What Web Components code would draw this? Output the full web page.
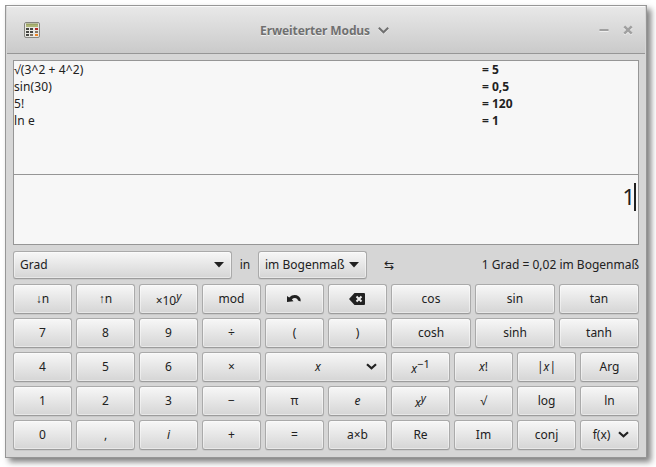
<!DOCTYPE html>
<html lang="de">
<head>
<meta charset="utf-8">
<title>Erweiterter Modus</title>
<style>
html, body { margin: 0; background: #fff; }
body { width: 656px; height: 467px; overflow: hidden; padding: 5px; box-sizing: border-box; font: 12px/17px "Noto Sans", "Open Sans", sans-serif; color: #212121; }
</style>
</head>
<body>
<calc-window></calc-window>
<script>
const define = (name, html) => customElements.define(name, class extends HTMLElement {
  constructor() {
    super();
    const t = document.createElement('template');
    t.innerHTML = html;
    this.attachShadow({ mode: 'open' }).appendChild(t.content.cloneNode(true));
  }
});

define('calc-header', `
<style>
:host { display: flex; align-items: center; box-sizing: border-box; height: 48px; margin: 0 1px; padding: 0 12px 0 17px; border-top: 1px solid #fafafa; border-bottom: 1px solid #969696; background: linear-gradient(#e8e8e8, #cacaca); }
.mode { flex: 1; display: flex; align-items: center; justify-content: center; gap: 8px; font-weight: bold; letter-spacing: -.12px; color: #707070; text-shadow: 0 1px rgba(255,255,255,.7); padding-left: 10px; }
svg { display: block; }
.controls { display: flex; align-items: center; gap: 14px; }
</style>
<svg width="16" height="16" viewBox="0 0 16 16">
  <rect x=".5" y=".5" width="15" height="15" rx="1.5" fill="#e9e8e3" stroke="#85857f"/>
  <rect x="2" y="2" width="12" height="3" fill="#adb575"/><path d="M2 2h12" stroke="#8c9456"/>
  <g fill="#464744"><path d="M2 6h3v2H2zM6 6h3v2H6zM2 9h3v2H2zM6 9h3v2H6zM2 12h3v2H2z"/></g>
  <path d="M11 6h3v2h-3z" fill="#b22a25"/><path d="M11 9h3v2h-3zM6 12h3v2H6z" fill="#817365"/><path d="M11 12h3v2h-3z" fill="#ef8424"/>
</svg>
<div class="mode"><slot></slot><svg width="11" height="7" viewBox="0 0 11 7" fill="none" stroke-width="2"><path d="M.8 1.8 5.5 6l4.7-4.2" stroke="#eee"/><path d="M.8.8 5.5 5.3 10.2.8" stroke="#707070"/></svg></div>
<div class="controls">
  <svg width="10" height="10" viewBox="0 0 10 10"><path d="M.5 6.5h9" stroke="#eee"/><path d="M.5 5h9" stroke="#a0a0a0" stroke-width="2"/></svg>
  <svg width="10" height="10" viewBox="0 0 10 10" fill="none" stroke-width="2.5"><path d="m1.3 2.3 7.4 7.4m0-7.4L1.3 9.7" stroke="#eee"/><path d="m1.3 1.3 7.4 7.4m0-7.4L1.3 8.7" stroke="#a0a0a0"/></svg>
</div>`);

define('calc-entry', `
<style>
:host { display: grid; grid-template-columns: 468px 1fr; height: 17px; letter-spacing: .12px; }
b { font-weight: bold; letter-spacing: 0; }
</style>
<slot></slot><b><slot name="result"></slot></b>`);

define('calc-display', `
<style>
:host { display: flex; flex-direction: column; box-sizing: border-box; height: 185px; border: 1px solid #969696; background: #f7f7f7; }
.history { box-sizing: border-box; height: 114px; border-bottom: 1px solid #969696; }
.input { flex: 1; display: flex; justify-content: flex-end; align-items: flex-start; padding: 8px 2px 0 0; font-size: 22px; line-height: 27px; letter-spacing: -1px; }
.caret { width: 2px; height: 28px; background: #212121; }
</style>
<div class="history"><slot></slot></div>
<div class="input"><slot name="input"></slot><span class="caret"></span></div>`);

define('calc-button', `
<style>
:host { display: flex; align-items: center; justify-content: center; box-sizing: border-box; height: 30px; padding-bottom: 1px; border: 1px solid #aaa; border-bottom-color: #9c9c9c; border-radius: 3px; background: linear-gradient(#f7f7f7, #d5d5d5); box-shadow: inset 0 0 0 1px rgba(255,255,255,.45), 0 1px rgba(0,0,0,.06); white-space: pre; }
:host([combo]) { height: 28px; justify-content: space-between; padding: 0 7px 1px 6px; }
:host([icon]) { padding-right: 2px; }
::slotted(svg) { display: block; }
</style>
<slot></slot>`);

define('calc-units', `
<style>
:host { display: grid; grid-template-columns: 219px 26px 109px 44px 1fr; align-items: center; height: 28px; margin: 6px 0 5px; text-align: center; }
.result { text-align: right; white-space: nowrap; }
svg { display: block; }
span { margin-top: -1px; }
</style>
<calc-button combo>Grad<svg width="10" height="6"><path d="M0 0h10L5 5.5z" fill="#212121"/></svg></calc-button>
<span>in</span>
<calc-button combo>im Bogenmaß<svg width="10" height="6"><path d="M0 0h10L5 5.5z" fill="#212121"/></svg></calc-button>
<span>⇆</span>
<span class="result">1 Grad = 0,02 im Bogenmaß</span>`);

define('calc-row', `
<style>
:host { display: grid; grid-auto-flow: column; grid-template-columns: repeat(10, 59px); gap: 4px; }
:host([mixed]) { grid-template-columns: repeat(6, 59px) repeat(3, 80px); }
:host([var]) { grid-template-columns: repeat(4, 59px) 122px repeat(4, 59px); }
</style>
<slot></slot>`);

define('calc-window', `
<style>
:host { display: block; box-sizing: border-box; width: 642px; height: 453px; border: 1px solid #969696; background: #d6d6d6; box-shadow: 4px 4px 6px rgba(0,0,0,.5); }
.body { padding: 6px 7px; }
.keys { display: grid; gap: 4px; }
sup { font-size: 11px; line-height: 0; vertical-align: 5px; }
.raised { position: relative; top: 2px; }
.var { display: flex; align-items: center; width: 104px; margin-right: 2px; }
.var i { flex: 1; text-align: center; padding-right: 3px; }
.fx { display: flex; align-items: center; gap: 8px; margin-left: 3px; }
svg { display: block; }
</style>
<calc-header>Erweiterter Modus</calc-header>
<div class="body">
<calc-display>
  <calc-entry>√(3^2 + 4^2)<span slot="result">= 5</span></calc-entry>
  <calc-entry>sin(30)<span slot="result">= 0,5</span></calc-entry>
  <calc-entry>5!<span slot="result">= 120</span></calc-entry>
  <calc-entry>ln e<span slot="result">= 1</span></calc-entry>
  <span slot="input">1</span>
</calc-display>
<calc-units></calc-units>
<div class="keys">
<calc-row mixed><calc-button>↓n</calc-button><calc-button>↑n</calc-button><calc-button><span class="raised">×10<sup><i>y</i></sup></span></calc-button><calc-button>mod</calc-button><calc-button icon><svg width="14" height="9" viewBox="0 0 14 9"><path d="M0 2 2.200 3.500C5 .5 9 .3 11.500 2.200 13.500 3.700 14 5.500 13.500 7.500L11 6.500C10.500 4 7.500 3.200 4.800 5.200L6.500 7.200 0 8z" fill="#212121"/></svg></calc-button><calc-button icon><svg width="16" height="12" viewBox="0 0 16 12"><path d="M0 6 5.500 0H15q1 0 1 1v10q0 1-1 1H5.500z" fill="#212121"/><path d="m7.500 3.500 5 5m0-5-5 5" stroke="#eee" stroke-width="2"/></svg></calc-button><calc-button>cos</calc-button><calc-button>sin</calc-button><calc-button>tan</calc-button></calc-row>
<calc-row mixed><calc-button>7</calc-button><calc-button>8</calc-button><calc-button>9</calc-button><calc-button>÷</calc-button><calc-button>(</calc-button><calc-button>)</calc-button><calc-button>cosh</calc-button><calc-button>sinh</calc-button><calc-button>tanh</calc-button></calc-row>
<calc-row var><calc-button>4</calc-button><calc-button>5</calc-button><calc-button>6</calc-button><calc-button>×</calc-button><calc-button><span class="var"><i>x</i><svg width="11" height="7" viewBox="0 0 11 7"><path d="M1 1.200 5.500 5.300 10 1.200" fill="none" stroke="#212121" stroke-width="2.200"/></svg></span></calc-button><calc-button><span class="raised"><i>x</i><sup>−1</sup></span></calc-button><calc-button><span><i>x</i>!</span></calc-button><calc-button><span>|<i>x</i>|</span></calc-button><calc-button>Arg</calc-button></calc-row>
<calc-row><calc-button>1</calc-button><calc-button>2</calc-button><calc-button>3</calc-button><calc-button>−</calc-button><calc-button>π</calc-button><calc-button><i>e</i></calc-button><calc-button><span class="raised"><i>x<sup>y</sup></i></span></calc-button><calc-button>√</calc-button><calc-button>log</calc-button><calc-button>ln</calc-button></calc-row>
<calc-row><calc-button>0</calc-button><calc-button>,</calc-button><calc-button><i>i</i></calc-button><calc-button>+</calc-button><calc-button>=</calc-button><calc-button>a×b</calc-button><calc-button>Re</calc-button><calc-button>Im</calc-button><calc-button>conj</calc-button><calc-button><span class="fx">f(x)<svg width="11" height="7" viewBox="0 0 11 7"><path d="M1 1.200 5.500 5.300 10 1.200" fill="none" stroke="#212121" stroke-width="2.200"/></svg></span></calc-button></calc-row>
</div>
</div>`);
</script>
</body>
</html>
